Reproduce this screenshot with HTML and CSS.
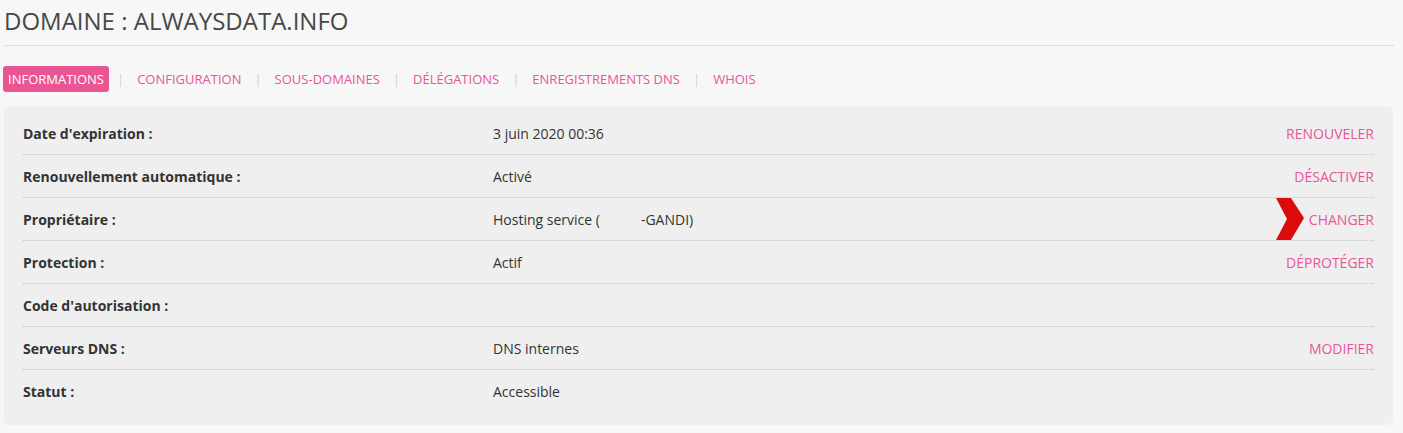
FILE: index.html
```html
<!DOCTYPE html>
<html lang="fr">
<head>
<meta charset="utf-8">
<title>Domaine : alwaysdata.info</title>
<link rel="stylesheet" href="styles.css">
</head>
<body>
<div class="page">
  <h1 class="title">DOMAINE : ALWAYSDATA.INFO</h1>
  <nav class="tabs">
    <a class="tab active">INFORMATIONS</a><span class="sep">|</span>
    <a class="tab">CONFIGURATION</a><span class="sep">|</span>
    <a class="tab">SOUS-DOMAINES</a><span class="sep">|</span>
    <a class="tab">DÉLÉGATIONS</a><span class="sep">|</span>
    <a class="tab">ENREGISTREMENTS DNS</a><span class="sep">|</span>
    <a class="tab">WHOIS</a>
  </nav>
  <div class="panel">
    <div class="row"><div class="label">Date d'expiration :</div><div class="value">3 juin 2020 00:36</div><a class="action">RENOUVELER</a></div>
    <div class="row"><div class="label">Renouvellement automatique :</div><div class="value">Activé</div><a class="action">DÉSACTIVER</a></div>
    <div class="row"><div class="label">Propriétaire :</div><div class="value">Hosting service (<span class="gap"></span>-GANDI)</div><a class="action">CHANGER</a>
      <svg class="chevron" width="28" height="42" viewBox="0 0 28 42"><polygon points="0,0 15,0 28,20 15,42 0,42 11,21" fill="#dc0b0b"/></svg>
    </div>
    <div class="row"><div class="label">Protection :</div><div class="value">Actif</div><a class="action">DÉPROTÉGER</a></div>
    <div class="row"><div class="label">Code d'autorisation :</div><div class="value"></div><span></span></div>
    <div class="row"><div class="label">Serveurs DNS :</div><div class="value">DNS internes</div><a class="action">MODIFIER</a></div>
    <div class="row last"><div class="label">Statut :</div><div class="value">Accessible</div><span></span></div>
  </div>
</div>
</body>
</html>
```
FILE: styles.css
```css
html, body {
  margin: 0;
  padding: 0;
  background: #f7f7f7;
}
body {
  font-family: "Open Sans", "Liberation Sans", sans-serif;
  color: #333;
}
.page {
  padding: 0 10px 0 4px;
}
.title {
  margin: 4px 0 0;
  font-size: 24px;
  line-height: 33px;
  font-weight: 400;
  color: #474747;
  padding-bottom: 8px;
  border-bottom: 1px dotted #c4c4c4;
}
.tabs {
  display: flex;
  align-items: center;
  margin-top: 20px;
  margin-left: -1px;
}
.tab {
  font-size: 13px;
  line-height: 18px;
  padding: 4px 5px;
  color: #e8559a;
  border-radius: 3px;
  cursor: pointer;
}
.tab.active {
  background: #ea5593;
  color: #fff;
}
.sep {
  font-size: 13px;
  color: #d0d0d0;
  margin: 0 8px 0 8px;
}
.panel {
  margin-top: 14px;
  background: #efefef;
  border-radius: 6px;
  padding: 6px 19px 13px;
}
.row {
  position: relative;
  display: grid;
  grid-template-columns: 470px 1fr auto;
  align-items: center;
  height: 42px;
  border-bottom: 1px dotted #c2c2c2;
  font-size: 14px;
}
.row.last {
  border-bottom: none;
}
.label {
  font-weight: 700;
  color: #333;
}
.value {
  color: #333;
}
.gap {
  display: inline-block;
  width: 41px;
}
.action {
  font-size: 14px;
  color: #e8559a;
  cursor: pointer;
}
.chevron {
  position: absolute;
  right: 70px;
  top: 0;
}
```
